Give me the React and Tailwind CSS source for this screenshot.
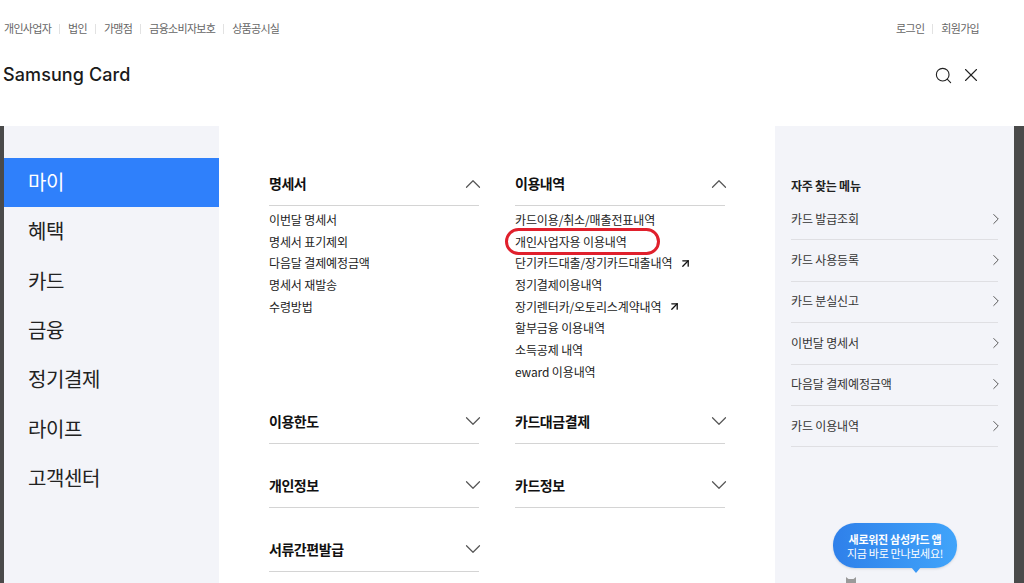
import React from "react";
import { ChevronUp, ChevronDown, ChevronRight, Search, X, ArrowUpRight } from "lucide-react";

const topLinks = ["개인사업자", "법인", "가맹점", "금융소비자보호", "상품공시실"];
const sideMenu = ["마이", "혜택", "카드", "금융", "정기결제", "라이프", "고객센터"];
const favorites = ["카드 발급조회", "카드 사용등록", "카드 분실신고", "이번달 명세서", "다음달 결제예정금액", "카드 이용내역"];

const statementLinks = [
    { label: "이번달 명세서" },
    { label: "명세서 표기제외" },
    { label: "다음달 결제예정금액" },
    { label: "명세서 재발송" },
    { label: "수령방법" },
];
const usageLinks = [
    { label: "카드이용/취소/매출전표내역" },
    { label: "개인사업자용 이용내역", circled: true },
    { label: "단기카드대출/장기카드대출내역", external: true },
    { label: "정기결제이용내역" },
    { label: "장기렌터카/오토리스계약내역", external: true },
    { label: "할부금융 이용내역" },
    { label: "소득공제 내역" },
    { label: "eward 이용내역" },
];

function Section({ title, open, links = [], className = "" }) {
    const Chevron = open ? ChevronUp : ChevronDown;
    return (
        <div className={className}>
            <div className="flex h-[43px] items-center justify-between border-b border-[#d4d4d4] pb-[1px]">
                <span className="text-[14px] font-bold tracking-[-0.45px] text-[#111]">{title}</span>
                <Chevron size={26} strokeWidth={1.1} className="mr-[-7px] text-[#555]" />
            </div>
            {open && (
                <ul className="pt-[3px]">
                    {links.map((link) => (
                        <li key={link.label} className="relative flex h-[21.7px] items-center text-[12px] tracking-[-0.13px] text-[#222]">
                            {link.label}
                            {link.external && <ArrowUpRight size={13} strokeWidth={2.4} className="ml-[7px] text-[#111]" />}
                            {link.circled && (
                                <span className="absolute left-[-10px] top-[-3px] h-[27px] w-[155px] rounded-[14px] border-[3px] border-[#e0202c]"></span>
                            )}
                        </li>
                    ))}
                </ul>
            )}
        </div>
    );
}

export default function App() {
    return (
        <div className="h-[583px] w-[1024px] overflow-hidden bg-white font-['Noto_Sans_CJK_KR','Noto_Sans',sans-serif]">
            <header className="h-[126px] px-[4px]">
                <div className="flex h-[57px] items-center justify-between">
                    <nav className="flex items-center text-[11px] tracking-[-0.7px] text-[#666]">
                        {topLinks.map((item, i) => (
                            <React.Fragment key={item}>
                                {i > 0 && <span className="mx-[8px] h-[10px] w-px bg-[#e2e2e2]"></span>}
                                <span>{item}</span>
                            </React.Fragment>
                        ))}
                    </nav>
                    <nav className="mr-[41px] flex items-center text-[11px] tracking-[-0.7px] text-[#666]">
                        <span>로그인</span>
                        <span className="mx-[8px] h-[10px] w-px bg-[#e2e2e2]"></span>
                        <span>회원가입</span>
                    </nav>
                </div>
                <div className="flex items-center justify-between">
                    <span className="ml-[-1px] font-['Inter',sans-serif] text-[18px] font-medium leading-[36px] tracking-[0.1px] text-[#1a1a1a]">Samsung Card</span>
                    <div className="mr-[38px] flex items-center gap-[7px] text-[#222]">
                        <Search size={19} strokeWidth={1.4} />
                        <X size={22} strokeWidth={1.2} />
                    </div>
                </div>
            </header>

            <div className="flex h-[457px]">
                <div className="w-[4px] bg-[#4a4a4a]"></div>
                <aside className="w-[215px] bg-[#f3f4f9] pt-[32px]">
                    {sideMenu.map((item, i) => (
                        <div
                            key={item}
                            className={`flex h-[49.3px] items-center pb-[1px] pl-[24px] text-[20px] tracking-[-0.4px] ${i === 0 ? "bg-[#2f80fb] text-white" : "text-[#222]"}`}
                        >
                            {item}
                        </div>
                    ))}
                </aside>

                <main className="grid w-[556px] grid-cols-[210px_210px] content-start gap-x-[36px] pl-[50px] pt-[37px]">
                    <Section title="명세서" open links={statementLinks} />
                    <Section title="이용내역" open links={usageLinks} />
                    <Section title="이용한도" className="mt-[18px]" />
                    <Section title="카드대금결제" className="mt-[18px]" />
                    <Section title="개인정보" className="mt-[21px]" />
                    <Section title="카드정보" className="mt-[21px]" />
                    <Section title="서류간편발급" className="mt-[21px]" />
                </main>

                <aside className="relative w-[239px] bg-[#f3f4f9] px-[16px] pt-[52px]">
                    <h2 className="text-[12px] font-bold leading-[16px] tracking-[-0.25px] text-[#222]">자주 찾는 메뉴</h2>
                    <ul className="mt-[5px]">
                        {favorites.map((item) => (
                            <li key={item} className="flex h-[41.4px] items-center justify-between border-b border-[#dfdfe3] pb-[1px] text-[12px] tracking-[-0.15px] text-[#333]">
                                {item}
                                <ChevronRight size={18} strokeWidth={1.3} className="mr-[-7px] text-[#555]" />
                            </li>
                        ))}
                    </ul>
                    <div className="absolute left-[58px] top-[397px] flex h-[45px] w-[124px] flex-col items-center justify-center rounded-[22px] bg-gradient-to-r from-[#2f80ea] to-[#41a4fa] text-[11px] leading-[14px] tracking-[-0.3px] text-white shadow-sm">
                        <span className="font-bold">새로워진 삼성카드 앱</span>
                        <span>지금 바로 만나보세요!</span>
                        <span className="absolute bottom-[-5px] right-[36px] h-0 w-0 border-x-[5px] border-t-[6px] border-x-transparent border-t-[#3a98f5]"></span>
                    </div>
                    <svg className="absolute left-[70px] top-[450px]" width="12" height="7" viewBox="0 0 12 7">
                        <path d="M1 7V1l2.5 2h5L11 1v6z" fill="#9a9a9a" />
                    </svg>
                </aside>
                <div className="w-[10px] bg-[#4a4a4a]"></div>
            </div>
        </div>
    );
}
